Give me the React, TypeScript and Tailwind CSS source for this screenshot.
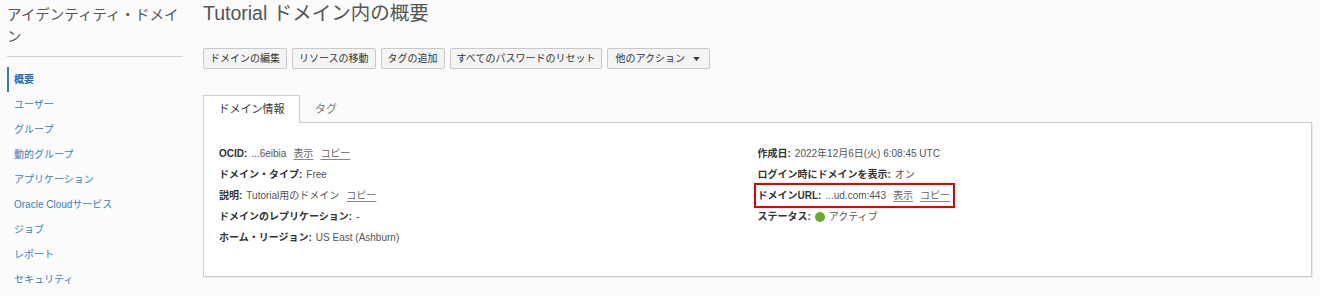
import React from "react";

const F = "font-['Liberation_Sans','Noto_Sans_CJK_JP',sans-serif]";

const navItems = [
  "概要",
  "ユーザー",
  "グループ",
  "動的グループ",
  "アプリケーション",
  "Oracle Cloudサービス",
  "ジョブ",
  "レポート",
  "セキュリティ",
];

const buttons = ["ドメインの編集", "リソースの移動", "タグの追加", "すべてのパスワードのリセット"];

function Link({ children }: { children: React.ReactNode }) {
  return <span className="ml-[7px] text-[#666] underline underline-offset-2 decoration-[#888]">{children}</span>;
}

function Row({ label, children }: { label: string; children?: React.ReactNode }) {
  return (
    <div className="h-[21px] flex items-center whitespace-nowrap">
      <span className="font-bold text-[#333]">{label}:</span>
      <span className="ml-[4px] text-[#555] flex items-center">{children}</span>
    </div>
  );
}

export default function App() {
  return (
    <div className={`${F} w-[1320px] h-[296px] bg-[#fbfbfb] flex overflow-hidden`}>
      <aside className="w-[183px] pl-[7px] shrink-0">
        <div className="w-[176px] pt-[4px] text-[14.5px] leading-[22px] text-[#555]">アイデンティティ・ドメイン</div>
        <div className="mt-[8px] h-px w-[176px] bg-[#cfcfcf]" />
        <nav className="mt-[10px] flex flex-col">
          {navItems.map((n, i) => (
            <div
              key={n}
              className={`h-[25px] flex items-center text-[10px] ${
                i === 0
                  ? "border-l-2 border-[#2f7bc4] pl-[5px] text-[#2a6bb0] font-bold"
                  : "pl-[7px] text-[#3580c6]"
              }`}
            >
              {n}
            </div>
          ))}
        </nav>
      </aside>

      <main className="ml-[20px] w-[1109px] flex flex-col">
        <h1 className="text-[19.5px] leading-[26px] text-[#555] font-normal">Tutorial ドメイン内の概要</h1>

        <div className="mt-[22px] flex gap-[5px]">
          {buttons.map((b) => (
            <div
              key={b}
              className="h-[21px] px-[6px] flex items-center whitespace-nowrap text-[10px] text-[#333] bg-[#f4f4f4] border border-[#c8c8c8] rounded-[2px]"
            >
              {b}
            </div>
          ))}
          <div className="h-[21px] px-[7px] flex items-center whitespace-nowrap text-[10px] text-[#333] bg-[#f4f4f4] border border-[#c8c8c8] rounded-[2px]">
            他のアクション
            <svg width="7" height="4" viewBox="0 0 8 5" className="ml-[8px] mr-[2px]">
              <path d="M0 0 H8 L4 5 Z" fill="#333" />
            </svg>
          </div>
        </div>

        <div className="mt-[26px] flex items-end h-[28px] relative z-10">
          <div className="h-[28px] w-[97px] flex items-center justify-center bg-white border border-b-0 border-[#cccccc] text-[11px] text-[#333]">
            ドメイン情報
          </div>
          <div className="h-[28px] px-[15px] flex items-center text-[11px] text-[#777]">タグ</div>
        </div>

        <section className="-mt-px h-[155px] bg-white border border-[#cccccc] shadow-[1px_1px_1px_rgba(0,0,0,0.06)] px-[15px] pt-[20px] grid grid-cols-2 text-[10px]">
          <div>
            <Row label="OCID">
              ...6eibia<Link>表示</Link>
              <Link>コピー</Link>
            </Row>
            <Row label="ドメイン・タイプ">Free</Row>
            <Row label="説明">
              Tutorial用のドメイン<Link>コピー</Link>
            </Row>
            <Row label="ドメインのレプリケーション">-</Row>
            <Row label="ホーム・リージョン">US East (Ashburn)</Row>
          </div>
          <div>
            <Row label="作成日">2022年12月6日(火) 6:08:45 UTC</Row>
            <Row label="ログイン時にドメインを表示">オン</Row>
            <div className="relative">
              <Row label="ドメインURL">
                ...ud.com:443<Link>表示</Link>
                <Link>コピー</Link>
              </Row>
              <span className="absolute left-[-4px] top-[-2px] w-[201px] h-[25px] border-2 border-[#e00000]" />
            </div>
            <Row label="ステータス">
              <span className="inline-block w-[10px] h-[10px] rounded-full bg-[#6aad2a] mr-[4px]" />
              アクティブ
            </Row>
          </div>
        </section>
      </main>
    </div>
  );
}
